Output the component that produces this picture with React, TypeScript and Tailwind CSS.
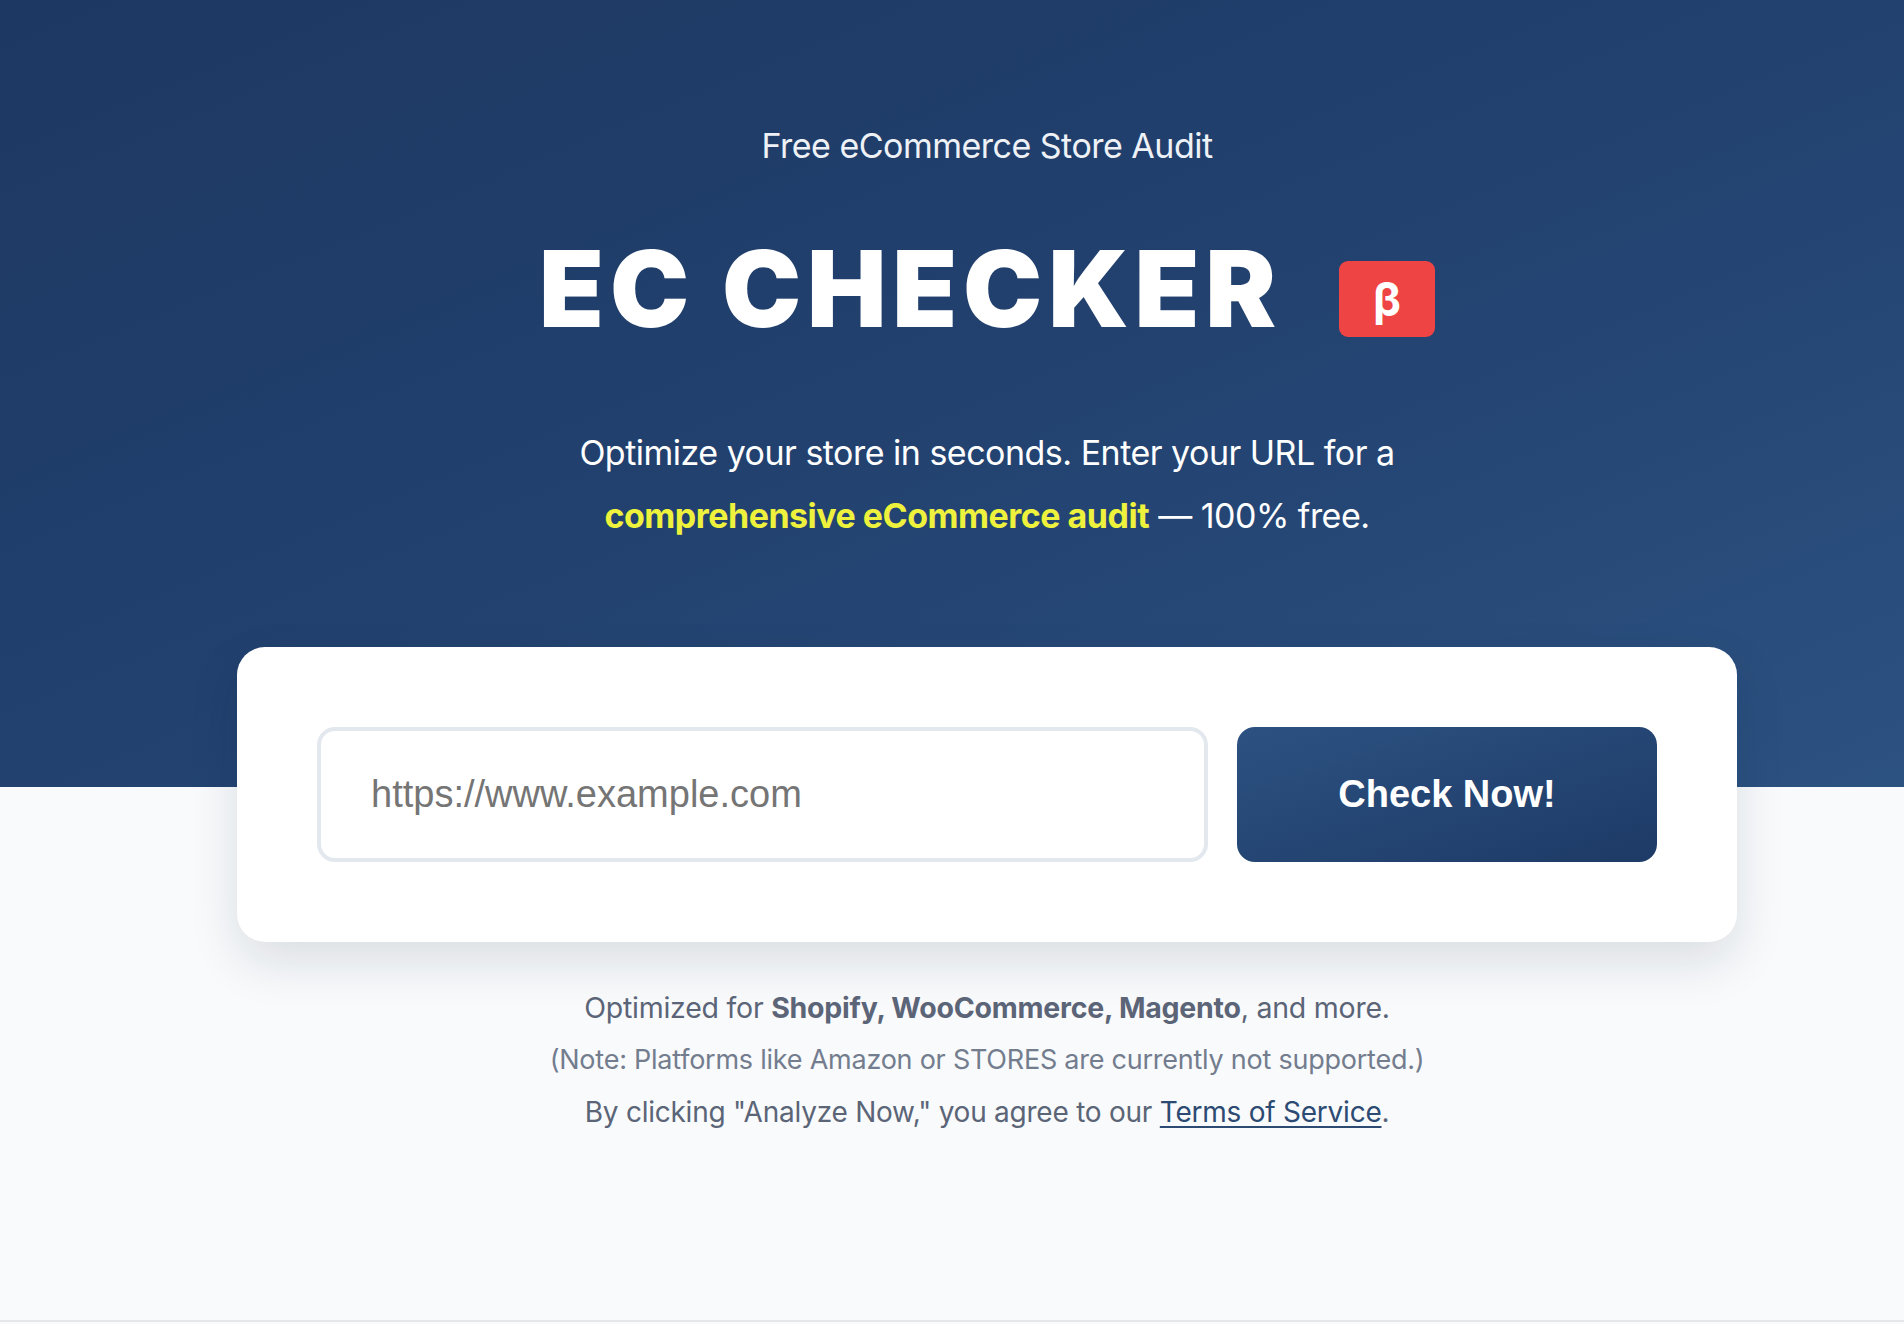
import React from "react";

export default function App() {
  return (
    <div
      className="min-h-[1324px] flex flex-col bg-[#f8fafc]"
      style={{ fontFamily: "Inter, 'Noto Sans', sans-serif" }}
    >
      <section className="h-[787px] bg-gradient-to-br from-[#1d3862] via-[#22416f] to-[#2c5282]">
        <div className="pl-[70px] pt-[126px] flex flex-col items-center">
          <p className="text-[34px] leading-[40px] text-[#eef2f7] font-normal tracking-[-0.015em]">
            Free eCommerce Store Audit
          </p>
          <div className="mt-[69px] flex items-center">
            <h1 className="text-[106px] leading-[108px] font-black text-white tracking-[0.055em]">
              EC CHECKER
            </h1>
            <span className="ml-[57px] mt-[20px] flex h-[76px] w-[96px] items-center justify-center rounded-[9px] bg-[#ef4444] text-[46px] font-bold text-white">
              β
            </span>
          </div>
          <div className="mt-[78px] text-center text-[34px] leading-[63px] text-white tracking-[-0.015em]">
            <p>Optimize your store in seconds. Enter your URL for a</p>
            <p>
              <span className="font-bold text-[#eef23c]">comprehensive eCommerce audit</span>{" "}
              — 100% free.
            </p>
          </div>
        </div>
      </section>

      <div className="pl-[70px] -mt-[140px] flex justify-center">
        <div className="w-[1500px] rounded-[28px] bg-white p-[80px] shadow-[0_20px_50px_rgba(15,23,42,0.12)] flex gap-[29px]">
          <input
            type="text"
            placeholder="https://www.example.com"
            className="h-[135px] w-[891px] rounded-[18px] border-[4px] border-[#e3e8ee] bg-white px-[50px] text-[38px] text-[#333] placeholder:text-[#757575] outline-none"
            style={{ fontFamily: "'Liberation Sans', Arial, sans-serif" }}
          />
          <button
            className="h-[135px] w-[420px] rounded-[18px] bg-gradient-to-br from-[#2c5282] to-[#1e3a66] text-[38px] font-bold text-white"
            style={{ fontFamily: "'Liberation Sans', Arial, sans-serif" }}
          >
            Check Now!
          </button>
        </div>
      </div>

      <div className="pl-[70px] mt-[40px] flex flex-col items-center text-[#5b6577] tracking-[-0.015em]">
        <p className="text-[28.5px] leading-[52px]">
          Optimized for <span className="font-bold">Shopify, WooCommerce, Magento</span>, and more.
        </p>
        <p className="text-[27px] leading-[52px] text-[#737d8e]">
          (Note: Platforms like Amazon or STORES are currently not supported.)
        </p>
        <p className="text-[28px] leading-[52px]">
          By clicking "Analyze Now," you agree to our{" "}
          <a href="#" className="text-[#2c4a72] underline underline-offset-4">
            Terms of Service
          </a>
          .
        </p>
      </div>

      <div className="flex-1" />
      <div className="h-[4px] border-t-2 border-[#e5e7eb]" />
    </div>
  );
}
